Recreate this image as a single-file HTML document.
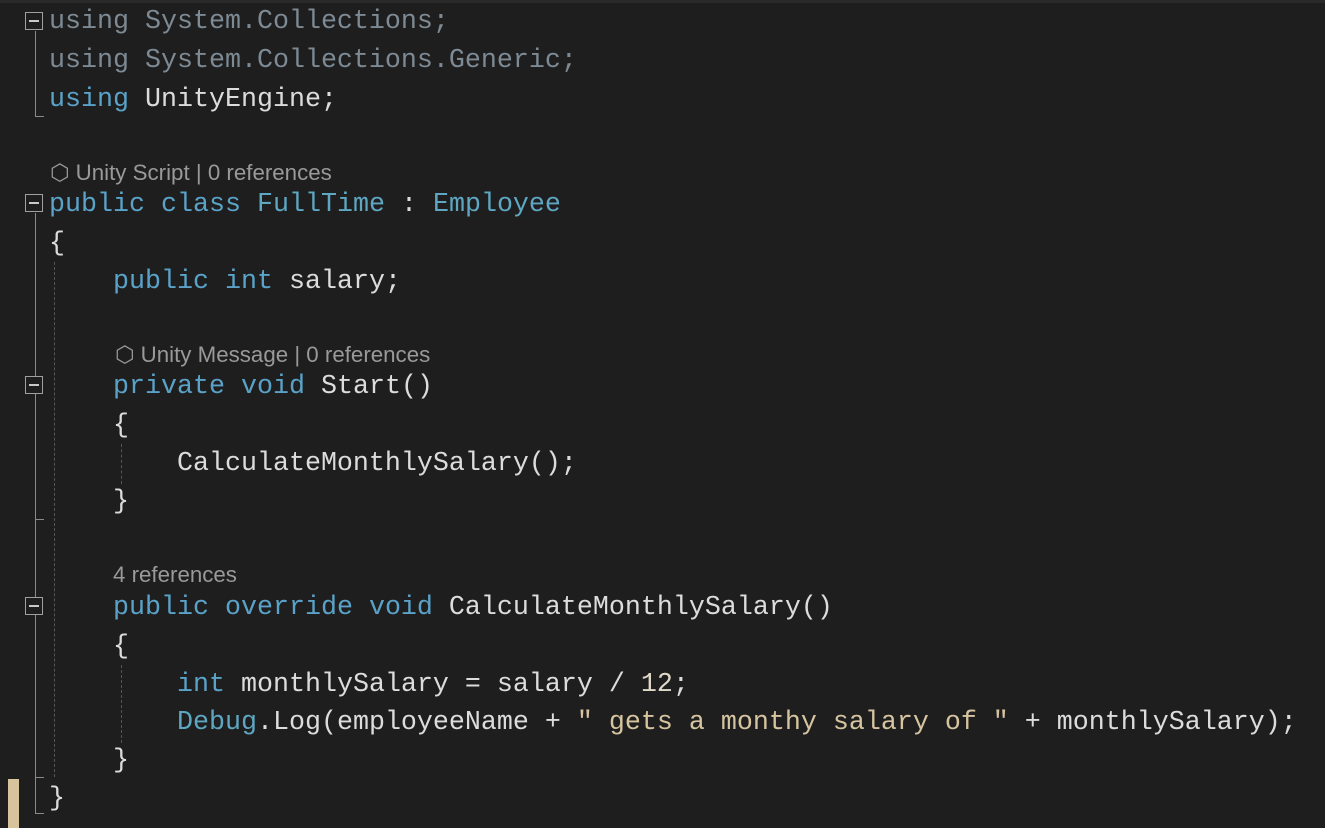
<!DOCTYPE html>
<html><head><meta charset="utf-8"><style>
body{margin:0;width:1325px;height:828px;background:#1e1e1e;overflow:hidden;position:relative;font-family:"Liberation Mono",monospace}
.l{position:absolute;left:49px;height:38px;line-height:38px;font-size:26.67px;color:#dcdcdc;white-space:pre}
.k{color:#5aa2c8}.t{color:#5ea6c2}.s{color:#d6c4a0}.f{color:#7d8a94}.n{color:#e0d8c8}
.lens{position:absolute;font-family:"Liberation Sans",sans-serif;font-size:22.3px;color:#999;white-space:pre;line-height:28px;height:28px}
.box{position:absolute;left:25px;width:16px;height:16px;border:1px solid #a0a0a0;background:#1e1e1e}
.box:after{content:"";position:absolute;left:3px;right:3px;top:7px;height:2px;background:#c8c8c8}
.vl{position:absolute;width:1px;background:#8a8a8a}
.hl{position:absolute;height:1px;background:#8a8a8a}
.dg{position:absolute;width:0;border-left:1px dashed #555}
</style></head><body>
<div style="position:absolute;top:0;left:0;right:0;height:3px;background:#2a2a2a"></div>
<div class="l" style="top:3px"><span class="f">using System.Collections;</span></div>
<div class="l" style="top:42px"><span class="f">using System.Collections.Generic;</span></div>
<div class="l" style="top:81px"><span class="k">using</span> UnityEngine;</div>
<div class="lens" style="left:50px;top:159px">⬡ Unity Script | 0 references</div>
<div class="l" style="top:186px"><span class="k">public class</span> <span class="t">FullTime</span> : <span class="t">Employee</span></div>
<div class="l" style="top:225px">{</div>
<div class="l" style="top:263px">    <span class="k">public int</span> salary;</div>
<div class="lens" style="left:115px;top:341px">⬡ Unity Message | 0 references</div>
<div class="l" style="top:368px">    <span class="k">private void</span> Start()</div>
<div class="l" style="top:407px">    {</div>
<div class="l" style="top:445px">        CalculateMonthlySalary();</div>
<div class="l" style="top:483px">    }</div>
<div class="lens" style="left:113px;top:561px">4 references</div>
<div class="l" style="top:589px">    <span class="k">public override void</span> CalculateMonthlySalary()</div>
<div class="l" style="top:628px">    {</div>
<div class="l" style="top:666px">        <span class="k">int</span> monthlySalary = salary / <span class="n">12</span>;</div>
<div class="l" style="top:704px">        <span class="t">Debug</span>.Log(employeeName + <span class="s">" gets a monthy salary of "</span> + monthlySalary);</div>
<div class="l" style="top:742px">    }</div>
<div class="l" style="top:780px">}</div>
<div class="vl" style="left:35px;top:31px;height:86px"></div><div class="hl" style="left:35px;top:116px;width:9px"></div>
<div class="box" style="top:12px"></div>
<div class="vl" style="left:35px;top:213px;height:601px"></div><div class="hl" style="left:35px;top:813px;width:9px"></div>
<div class="box" style="top:194px"></div>
<div class="hl" style="left:35px;top:519px;width:9px"></div>
<div class="box" style="top:376px"></div>
<div class="hl" style="left:35px;top:777px;width:9px"></div>
<div class="box" style="top:597px"></div>
<div class="dg" style="left:54px;top:262px;height:515px"></div>
<div class="dg" style="left:121px;top:444px;height:40px"></div>
<div class="dg" style="left:121px;top:665px;height:78px"></div>
<div style="position:absolute;left:8px;top:779px;width:11px;height:49px;background:#d8c49c"></div>
</body></html>
